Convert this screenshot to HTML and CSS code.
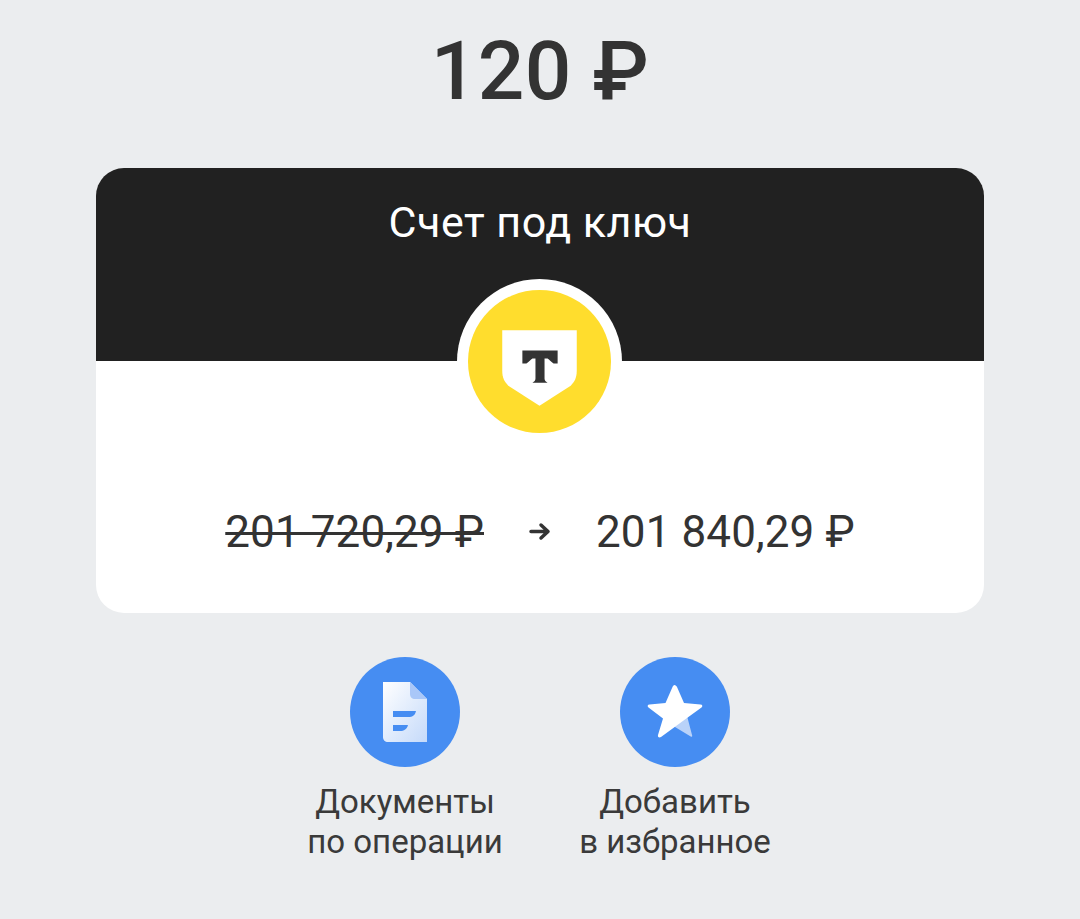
FILE: index.html
```html
<!DOCTYPE html>
<html lang="ru">
<head>
    <meta charset="UTF-8">
    <meta name="viewport" content="width=device-width, initial-scale=1.0">
    <title>Перевод</title>
    <link rel="stylesheet" href="styles.css">
</head>
<body>
    <h1 class="amount">120 ₽</h1>

    <div class="card">
        <div class="card-header">Счет под ключ</div>
        <div class="logo">
            <svg width="143" height="143" viewBox="0 0 142 142">
                <circle cx="71" cy="71" r="71" fill="#ffdd2d"/>
                <path d="M34 40H108V80C108 87 106 91 102 95L71 115L40 95C36 91 34 87 34 80Z" fill="#fff"/>
                <path d="M54 60H89V73H85C82 71 81 69 79 68H76V88C76 90 77 91 79 92H64C66 91 67 90 67 88V68H64C62 69 61 71 58 73H54Z" fill="#333"/>
            </svg>
        </div>
        <div class="card-body">
            <span class="old-price">201 720,29 ₽</span>
            <svg class="arrow" width="22" height="19" viewBox="0 0 22 19">
                <path d="M2 9.500H19M12 3L19 9.500L12 16" fill="none" stroke="#333" stroke-width="3.500" stroke-linecap="round" stroke-linejoin="round"/>
            </svg>
            <span class="new-price">201 840,29 ₽</span>
        </div>
    </div>

    <div class="actions">
        <div class="action">
            <div class="action-icon">
                <svg width="110" height="110" viewBox="0 0 110 110">
                    <defs>
                        <linearGradient id="docFill" x1="0" y1="0" x2="1" y2="1">
                            <stop offset="0" stop-color="#fff"/>
                            <stop offset="1" stop-color="#c5dafa"/>
                        </linearGradient>
                    </defs>
                    <path d="M33 25H60L77 42V85H38C35 85 33 83 33 80Z" fill="url(#docFill)"/>
                    <path d="M60 25L77 42H65C62 42 60 40 60 37Z" fill="#a9c7f8"/>
                    <path d="M43 54H66C65 58 63 60 58 60H43Z" fill="#468df2"/>
                    <path d="M43 68H58C57 72 54 74 50 74H43Z" fill="#468df2"/>
                </svg>
            </div>
            <div class="action-label">Документы<br>по операции</div>
        </div>
        <div class="action">
            <div class="action-icon">
                <svg width="110" height="110" viewBox="0 0 110 110">
                    <path d="M66.500 60L71.500 79L55 69Z" fill="#b9d2f9" stroke="#b9d2f9" stroke-width="1.500" stroke-linejoin="round"/>
                    <path d="M54.500 28C53.500 28 53 29 52.500 30L45.500 46L29.500 47.500C27.500 47.500 27 49.500 28.500 50.500L43 61.500L38 78C37.500 80 39 81 41 80L67 61L81.500 50.500C83 49.500 82.500 47.500 80.500 47.500L64 46L57 30C56.500 29 55.500 28 54.500 28Z" fill="#fff"/>
                </svg>
            </div>
            <div class="action-label">Добавить<br>в избранное</div>
        </div>
    </div>
</body>
</html>
```
FILE: styles.css
```css
* {
    margin: 0;
    padding: 0;
    box-sizing: border-box;
}

body {
    font-family: Roboto, "Liberation Sans", sans-serif;
    background-color: #ebedef;
    color: #333;
    padding: 24px 96px 0;
    min-height: 100vh;
    display: flex;
    flex-direction: column;
    align-items: center;
}

.amount {
    font-size: 82px;
    font-weight: 500;
    letter-spacing: 0.4px;
    line-height: 94px;
    margin-bottom: 50px;
}

.card {
    position: relative;
    width: 100%;
    height: 445px;
    background-color: #fff;
    border-radius: 28px;
    overflow: hidden;
    display: flex;
    flex-direction: column;
}

.card-header {
    height: 193px;
    background-color: #212121;
    color: #fff;
    font-size: 43px;
    letter-spacing: 0.5px;
    line-height: 47px;
    text-align: center;
    padding-top: 31px;
}

/* лежит поверх границы шапки и белой части */
.logo {
    position: absolute;
    top: 111px;
    left: 361px;
    width: 165px;
    height: 165px;
    padding: 11px;
    background-color: #fff;
    border-radius: 50%;
}

.logo svg {
    display: block;
}

.card-body {
    flex: 1;
    display: flex;
    justify-content: center;
    align-items: center;
    gap: 45px;
    font-size: 44px;
    letter-spacing: 0.1px;
    padding-top: 89px;
}

.old-price {
    text-decoration: line-through;
    text-decoration-thickness: 3px;
}

.actions {
    display: flex;
    justify-content: center;
    gap: 74px;
    margin-top: 44px;
}

.action {
    width: 196px;
    display: flex;
    flex-direction: column;
    align-items: center;
}

.action-icon {
    width: 110px;
    height: 110px;
    background-color: #468df2;
    border-radius: 50%;
    margin-bottom: 15px;
}

.action-icon svg {
    display: block;
}

.action-label {
    font-size: 33px;
    color: #3a3a3a;
    line-height: 40px;
    text-align: center;
    white-space: nowrap;
}
```
